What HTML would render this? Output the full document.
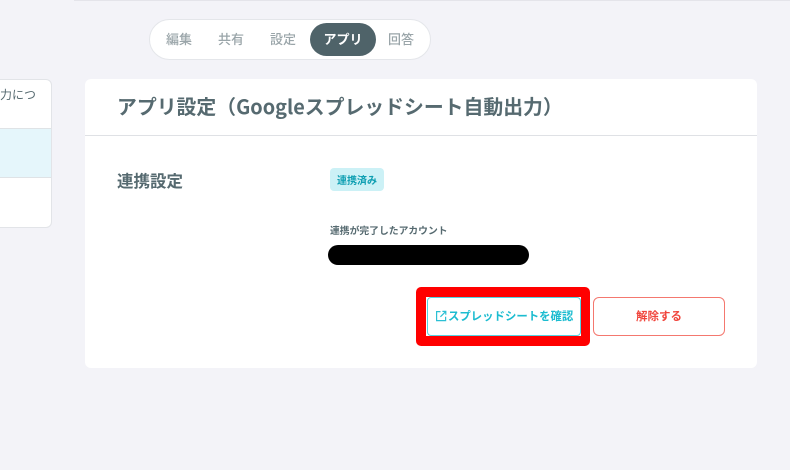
<!DOCTYPE html>
<html lang="ja">
<head>
<meta charset="utf-8">
<style>
html,body{margin:0;padding:0;width:790px;height:470px;overflow:hidden;background:#f3f3f8;font-family:"Noto Sans CJK JP","Liberation Sans",sans-serif;}
.a{position:absolute;box-sizing:border-box;white-space:nowrap;}
</style>
</head>
<body>
<div class="a" style="left:74px;top:0;width:716px;height:1px;background:#e4e4ea"></div>

<div class="a" style="left:149px;top:19px;width:282px;height:41px;background:#fff;border:1px solid #e4e6ea;border-radius:21px"></div>
<div class="a" style="left:166px;top:30px;font-size:13px;line-height:18px;color:#9aa5a9;font-weight:500">編集</div>
<div class="a" style="left:218px;top:30px;font-size:13px;line-height:18px;color:#9aa5a9;font-weight:500">共有</div>
<div class="a" style="left:270px;top:30px;font-size:13px;line-height:18px;color:#9aa5a9;font-weight:500">設定</div>
<div class="a" style="left:310px;top:23px;width:66px;height:33px;background:#4f6369;border-radius:17px;color:#fff;font-size:13px;font-weight:700;line-height:32px;text-align:center">アプリ</div>
<div class="a" style="left:388px;top:30px;font-size:13px;line-height:18px;color:#9aa5a9;font-weight:500">回答</div>

<div class="a" style="left:-10px;top:79px;width:62px;height:149px;background:#fff;border:1px solid #e2e4e8;border-radius:6px;overflow:hidden">
  <div class="a" style="left:0;top:48px;width:60px;height:50px;background:#e5f6fb;border-top:1px solid #dfe3e6;border-bottom:1px solid #dfe3e6"></div>
  <div class="a" style="left:-3px;top:6px;font-size:12px;line-height:18px;color:#566a70">出力につ</div>
</div>

<div class="a" style="left:85px;top:79px;width:672px;height:289px;background:#fff;border-radius:6px"></div>
<div class="a" style="left:85px;top:135px;width:672px;height:1px;background:#dfe1e5"></div>
<div class="a" style="left:117px;top:92px;font-size:19.85px;line-height:28px;font-weight:700;color:#566a70">アプリ設定（Googleスプレッドシート自動出力）</div>
<div class="a" style="left:117px;top:169px;font-size:16.5px;line-height:23px;font-weight:700;color:#566a70">連携設定</div>

<div class="a" style="left:330px;top:168px;width:54px;height:23px;background:#ccf1f6;border-radius:4px;color:#0f9fb2;font-size:10px;font-weight:700;line-height:23px;text-align:center">連携済み</div>
<div class="a" style="left:330px;top:223px;font-size:9.8px;line-height:14px;font-weight:700;color:#566a70">連携が完了したアカウント</div>
<div class="a" style="left:328px;top:245px;width:201px;height:20px;background:#000;border-radius:10px"></div>

<div class="a" style="left:416px;top:287px;width:174px;height:59px;background:#f00;border-radius:5px"></div>
<div class="a" style="left:426px;top:297px;width:155px;height:39px;background:#fff"></div>
<div class="a" style="left:427px;top:297px;width:154px;height:39px;background:#fff;border:1px solid #55d3e2;border-radius:4px"></div>
<svg class="a" style="left:435px;top:310px" width="12" height="12" viewBox="0 0 12 12" fill="none" stroke="#2cc0d4" stroke-width="1.2"><path d="M5.5 1.6H1.6v9h9V6.8M7.4 1.4h3.4v3.4M10.8 1.4L5.4 6.8"/></svg>
<div class="a" style="left:448px;top:308px;font-size:11.4px;line-height:17px;font-weight:700;color:#1cbcd0">スプレッドシートを確認</div>

<div class="a" style="left:593px;top:297px;width:132px;height:39px;background:#fff;border:1px solid #f4786f;border-radius:6px;color:#f0453c;font-size:11.5px;font-weight:700;line-height:37px;text-align:center">解除する</div>
</body>
</html>
